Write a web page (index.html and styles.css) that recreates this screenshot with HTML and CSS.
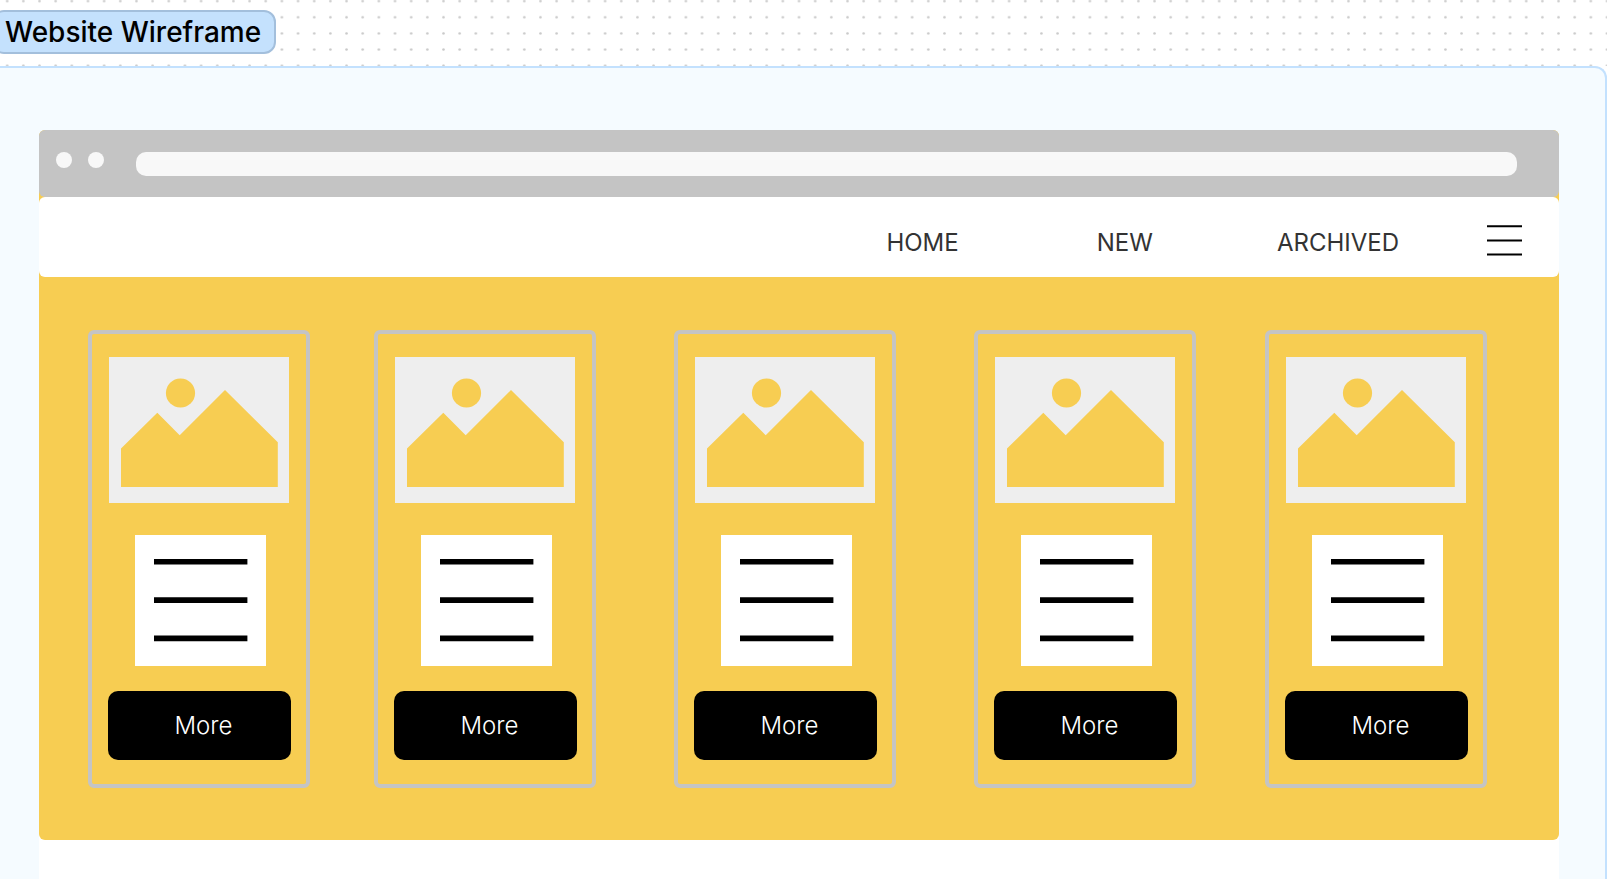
FILE: index.html
```html
<!DOCTYPE html>
<html lang="en">
<head>
<meta charset="utf-8">
<meta name="viewport" content="width=device-width, initial-scale=1">
<title>Website Wireframe</title>
<link rel="stylesheet" href="styles.css">
</head>
<body>
<svg width="0" height="0" class="symbols" aria-hidden="true">
  <symbol id="picture" viewBox="0 0 180 146">
    <rect width="180" height="146" fill="#eeeeee"/>
    <circle cx="71.5" cy="36" r="14.6" fill="#f7cd52"/>
    <path d="M12 91.5 48.3 55.8 70.7 78.3 116 33 168.8 85.3V130H12Z" fill="#f7cd52"/>
  </symbol>
  <symbol id="document" viewBox="0 0 131 131">
    <rect width="131" height="131" fill="#ffffff"/>
    <path d="M19 26.8H112.4M19 65.1H112.4M19 103.4H112.4" stroke="#000000" stroke-width="5.6"/>
  </symbol>
</svg>

<header class="board-head">
  <svg class="board-dots" aria-hidden="true">
    <defs>
      <pattern id="dots" width="16.16" height="16.16" x="-0.9" y="-7" patternUnits="userSpaceOnUse">
        <circle cx="8.08" cy="8.08" r="1.3" fill="#c8c8c8"/>
      </pattern>
    </defs>
    <rect width="100%" height="100%" fill="url(#dots)"/>
  </svg>
  <h1 class="board-label">Website Wireframe</h1>
</header>

<main class="section">
  <div class="window">
    <div class="site">
      <div class="browser-bar">
        <span class="browser-dot"></span>
        <span class="browser-dot"></span>
        <input class="address" type="text" aria-label="Address">
      </div>
      <nav class="nav">
        <a class="nav-link home" href="#">HOME</a>
        <a class="nav-link new" href="#">NEW</a>
        <a class="nav-link archived" href="#">ARCHIVED</a>
        <button class="menu" type="button" aria-label="Menu">
          <svg width="35" height="32" viewBox="0 0 35 32" aria-hidden="true"><path d="M0 1.2H35M0 15.4H35M0 29.6H35" stroke="#000000" stroke-width="2"/></svg>
        </button>
      </nav>
      <div class="cards">
        <article class="card">
          <svg class="picture" aria-hidden="true"><use href="#picture"/></svg>
          <svg class="document" aria-hidden="true"><use href="#document"/></svg>
          <button class="more" type="button">More</button>
        </article>
        <article class="card">
          <svg class="picture" aria-hidden="true"><use href="#picture"/></svg>
          <svg class="document" aria-hidden="true"><use href="#document"/></svg>
          <button class="more" type="button">More</button>
        </article>
        <article class="card">
          <svg class="picture" aria-hidden="true"><use href="#picture"/></svg>
          <svg class="document" aria-hidden="true"><use href="#document"/></svg>
          <button class="more" type="button">More</button>
        </article>
        <article class="card">
          <svg class="picture" aria-hidden="true"><use href="#picture"/></svg>
          <svg class="document" aria-hidden="true"><use href="#document"/></svg>
          <button class="more" type="button">More</button>
        </article>
        <article class="card">
          <svg class="picture" aria-hidden="true"><use href="#picture"/></svg>
          <svg class="document" aria-hidden="true"><use href="#document"/></svg>
          <button class="more" type="button">More</button>
        </article>
      </div>
    </div>
  </div>
</main>
</body>
</html>
```
FILE: styles.css
```css
* {
  box-sizing: border-box;
}

body {
  margin: 0;
  min-height: 100vh;
  display: flex;
  flex-direction: column;
  background: #ffffff;
  font-family: Inter, "Liberation Sans", sans-serif;
}

.symbols {
  position: absolute;
}

.board-head {
  position: relative;
  display: flex;
  padding: 10px 0 12px;
}

.board-dots {
  position: absolute;
  inset: 0;
  width: 100%;
  height: 100%;
}

.board-label {
  position: relative;
  margin: 0 0 0 -8px;
  padding: 0 13px 0 11px;
  border: 2px solid #a3bfdc;
  border-radius: 12px;
  background: #c4e1fd;
  color: #000000;
  font-size: 28px;
  font-weight: 500;
  line-height: 40px;
}

.section {
  flex: 1;
  display: flex;
  border: 2px solid #c3e1fe;
  border-width: 2px 2px 0 0;
  border-top-right-radius: 12px;
  padding: 62px 46px 0 39px;
  background: #f5fbff;
}

.window {
  flex: 1;
  border-radius: 6px 6px 0 0;
  background: #ffffff;
}

.site {
  border-radius: 6px;
  background: #f7cd52;
}

.browser-bar {
  display: flex;
  align-items: flex-start;
  gap: 16px;
  padding: 22px 42px 21px 17px;
  border-radius: 6px;
  background: #c4c4c4;
}

.browser-dot {
  width: 16px;
  height: 16px;
  border-radius: 50%;
  background: #f8f8f8;
}

.address {
  flex: 1;
  min-width: 0;
  height: 24px;
  margin-left: 16px;
  padding: 0 12px;
  border: 0;
  border-radius: 10px;
  background: #f8f8f8;
  font: inherit;
}

.nav {
  display: flex;
  justify-content: flex-end;
  align-items: center;
  height: 80px;
  padding: 8px 37px 0 0;
  border-radius: 6px;
  background: #ffffff;
}

.nav-link {
  padding-top: 4px;
  color: #333333;
  font-size: 24px;
  line-height: 32px;
  text-decoration: none;
}

.home {
  margin-right: 138px;
}

.new {
  margin-right: 124px;
}

.archived {
  margin-right: 88px;
}

.menu {
  display: flex;
  padding: 0;
  border: 0;
  background: none;
}

.cards {
  display: grid;
  grid-template-columns: 49fr 222px 64fr 222px 78fr 222px 78fr 222px 69fr 222px 72fr;
  padding: 53px 0 52px;
}

.card {
  display: flex;
  flex-direction: column;
  align-items: center;
  padding: 23px 0 24px;
  border: 4px solid #c4c4c4;
  border-radius: 6px;
}

.card:nth-child(1) { grid-column: 2; }
.card:nth-child(2) { grid-column: 4; }
.card:nth-child(3) { grid-column: 6; }
.card:nth-child(4) { grid-column: 8; }
.card:nth-child(5) { grid-column: 10; }

.picture {
  width: 180px;
  height: 146px;
}

.document {
  width: 131px;
  height: 131px;
  margin: 32px 0 25px 2px;
}

.more {
  width: 183px;
  height: 69px;
  padding: 0 0 0 9px;
  border: 0;
  border-radius: 10px;
  background: #000000;
  color: #ffffff;
  font: 300 24px Inter, "Liberation Sans", sans-serif;
}
```
